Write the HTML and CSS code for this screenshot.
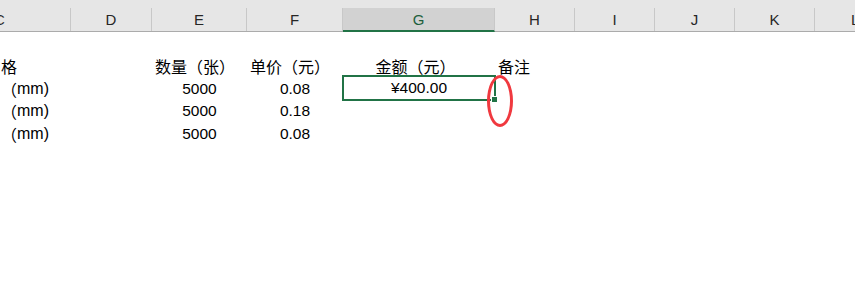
FILE: index.html
```html
<!DOCTYPE html>
<html>
<head>
    <meta charset="UTF-8">
    <title>Sheet</title>
    <link rel="stylesheet" href="styles.css">
</head>
<body>
    <div class="sheet">
        <div class="col-headers">
            <div class="col-head cut">C</div>
            <div class="col-head">D</div>
            <div class="col-head">E</div>
            <div class="col-head">F</div>
            <div class="col-head active">G</div>
            <div class="col-head">H</div>
            <div class="col-head">I</div>
            <div class="col-head">J</div>
            <div class="col-head">K</div>
            <div class="col-head cut">L</div>
        </div>
        <div class="grid">
            <div class="cell cjk spec">格</div>
            <div class="cell"></div>
            <div class="cell cjk left">数量（张）</div>
            <div class="cell cjk left">单价（元）</div>
            <div class="cell cjk center">金额（元）</div>
            <div class="cell cjk left">备注</div>
            <div class="cell"></div><div class="cell"></div><div class="cell"></div><div class="cell"></div>

            <div class="cell spec"><span class="paren">（</span>mm)</div>
            <div class="cell"></div>
            <div class="cell center">5000</div>
            <div class="cell center">0.08</div>
            <div class="cell center selected">
                ¥400.00
                <span class="fill-handle"></span>
                <span class="mark"></span>
            </div>
            <div class="cell"></div>
            <div class="cell"></div><div class="cell"></div><div class="cell"></div><div class="cell"></div>

            <div class="cell spec"><span class="paren">（</span>mm)</div>
            <div class="cell"></div>
            <div class="cell center">5000</div>
            <div class="cell center">0.18</div>
            <div class="cell"></div>
            <div class="cell"></div>
            <div class="cell"></div><div class="cell"></div><div class="cell"></div><div class="cell"></div>

            <div class="cell spec"><span class="paren">（</span>mm)</div>
            <div class="cell"></div>
            <div class="cell center">5000</div>
            <div class="cell center">0.08</div>
            <div class="cell"></div>
            <div class="cell"></div>
            <div class="cell"></div><div class="cell"></div><div class="cell"></div><div class="cell"></div>
        </div>
    </div>
</body>
</html>
```

FILE: styles.css
```css
body {
    margin: 0;
    background: #ffffff;
    font-family: "Liberation Sans", "Noto Sans CJK SC", sans-serif;
    overflow: hidden;
}

.sheet {
    width: 855px;
    height: 284px;
    overflow: hidden;
}

.col-headers {
    display: grid;
    grid-template-columns: 71px 81px 95px 96px 152px 80px 80px 80px 80px 1fr;
    height: 23px;
    padding-top: 8px;
    background: #e6e6e6;
    border-bottom: 1px solid #ababab;
}

.col-head {
    display: flex;
    align-items: center;
    justify-content: center;
    border-right: 1px solid #c8c8c8;
    font-size: 15px;
    color: #262626;
}

.col-head.cut:first-child {
    justify-content: flex-start;
    text-indent: -6px;
}

.col-head.cut:last-child {
    justify-content: flex-start;
    padding-left: 36px;
    border-right: none;
}

.col-head.active {
    background: #d2d2d2;
    color: #1e5f3c;
    border-bottom: 2px solid #217346;
    margin-bottom: -1px;
}

.grid {
    display: grid;
    grid-template-columns: 71px 81px 95px 96px 152px 80px 80px 80px 80px 1fr;
    grid-auto-rows: 22.5px;
    padding-top: 23px;
}

.cell {
    display: flex;
    align-items: center;
    font-size: 15.5px;
    color: #000;
    white-space: nowrap;
    position: relative;
}

.cjk {
    font-family: "Noto Sans CJK SC", sans-serif;
    font-size: 16px;
}

.left {
    padding-left: 3px;
}

.center {
    justify-content: center;
}

.cell.cjk.center {
    padding-right: 7px;
}

.spec {
    padding-left: 1px;
    font-size: 16px;
}

.spec .paren {
    font-family: "Noto Sans CJK SC", sans-serif;
    font-size: 16px;
}

.selected {
    outline: 2px solid #217346;
    outline-offset: -1px;
    margin-top: -2px;
}

.fill-handle {
    position: absolute;
    right: -3px;
    bottom: -3px;
    width: 5px;
    height: 5px;
    background: #217346;
    border: 1px solid #ffffff;
}

.mark {
    position: absolute;
    left: 144px;
    top: -1px;
    width: 20px;
    height: 46px;
    border: 3px solid #f0393f;
    border-radius: 50%;
}
```
